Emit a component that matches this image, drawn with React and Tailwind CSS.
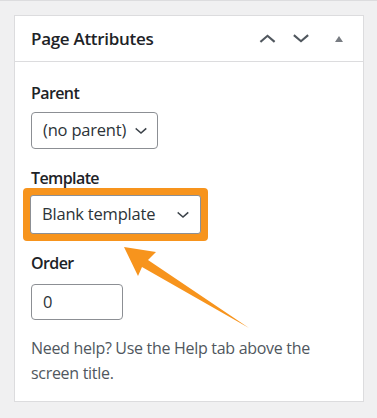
import React from 'react';

const Chevron = ({ dir = 'down', className = '' }) => (
  <svg viewBox="0 0 18 10" className={className} fill="none" stroke="currentColor" strokeWidth="2.4" strokeLinecap="square">
    {dir === 'down' ? <polyline points="2,2 9,8 16,2" /> : <polyline points="2,8 9,2 16,8" />}
  </svg>
);

export default function App() {
  return (
    <div
      className="relative w-[377px] h-[418px] bg-[#f0f0f1] border-t border-[#dcdcde] pt-[14px] pl-[14px] overflow-hidden"
      style={{ fontFamily: '"Open Sans", "Noto Sans", sans-serif' }}
    >
      {/* Page Attributes box */}
      <div className="w-[350px] h-[387px] bg-white border border-[#dcdcde]">
        <div className="flex items-center justify-between h-[46px] border-b border-[#dcdcde] pl-[16px] pr-[20px]">
          <h2 className="text-[17px] font-semibold text-[#1d2327] tracking-[-0.3px] pt-[1px]">Page Attributes</h2>
          <div className="flex items-center text-[#50575e]">
            <Chevron dir="up" className="w-[17px] h-[9px] mr-[16px]" />
            <Chevron dir="down" className="w-[18px] h-[9px] mr-[25px]" />
            <span className="w-0 h-0 border-l-[4px] border-r-[4px] border-b-[6px] border-l-transparent border-r-transparent border-b-[#787c82]" />
          </div>
        </div>

        <div className="px-[16px] pt-[21px]">
          <p className="text-[16px] leading-[20px] font-semibold text-[#1d2327] tracking-[-0.6px]">Parent</p>
          <div className="mt-[9px] flex items-center justify-between pl-[11px] pr-[10px] w-[127px] h-[37px] border border-[#8c8f94] rounded-[4px] bg-white text-[16.5px] text-[#2c3338] tracking-[-0.2px]">
            <span>(no parent)</span>
            <Chevron dir="down" className="w-[12px] h-[8px] text-[#3c434a]" />
          </div>

          <p className="mt-[19px] text-[16px] leading-[20px] font-semibold text-[#1d2327] tracking-[-0.6px]">Template</p>
          <div className="-ml-[8px] inline-block border-[8px] border-[#f7941d] rounded-[4px]">
            <div className="-m-[1px]">
              <div className="flex items-center justify-between pl-[11px] pr-[11px] w-[171px] h-[39px] border border-[#8c8f94] rounded-[3px] bg-white text-[16.5px] text-[#2c3338] tracking-[-0.2px]">
                <span>Blank template</span>
                <Chevron dir="down" className="w-[12px] h-[8px] text-[#3c434a]" />
              </div>
            </div>
          </div>

          <p className="mt-[12px] text-[16px] leading-[20px] font-semibold text-[#1d2327] tracking-[-0.6px]">Order</p>
          <div className="mt-[11px] w-[92px] h-[36px] border border-[#8c8f94] rounded-[4px] pl-[11px] flex items-center text-[16.5px] text-[#2c3338]">
            0
          </div>

          <p className="mt-[16px] text-[16px] leading-[25px] text-[#50575e] tracking-[-0.3px]">
            Need help? Use the Help tab above the screen title.
          </p>
        </div>
      </div>

      {/* callout arrow */}
      <svg className="absolute inset-0 pointer-events-none" width="377" height="418" viewBox="0 0 377 418">
        <polygon points="124,246 156,251 148,259 249,327 142,266 138,275" fill="#f7941d" />
      </svg>
    </div>
  );
}
